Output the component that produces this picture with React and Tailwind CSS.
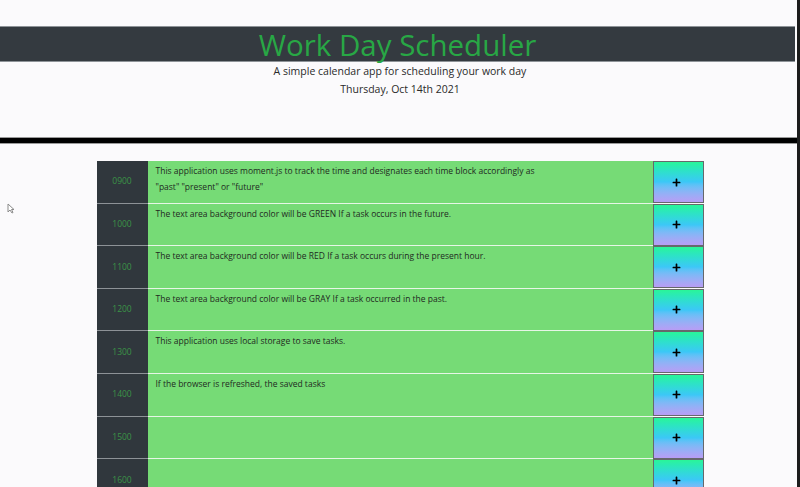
import { FaPlus } from "react-icons/fa";

const hours = [
  {
    time: "0900",
    lines: [
      "This application uses moment.js to track the time and designates each time block accordingly as",
      '"past" "present" or "future"',
    ],
  },
  { time: "1000", lines: ["The text area background color will be GREEN If a task occurs in the future."] },
  { time: "1100", lines: ["The text area background color will be RED If a task occurs during the present hour."] },
  { time: "1200", lines: ["The text area background color will be GRAY If a task occurred in the past."] },
  { time: "1300", lines: ["This application uses local storage to save tasks."] },
  { time: "1400", lines: ["If the browser is refreshed, the saved tasks"] },
  { time: "1500", lines: [] },
  { time: "1600", lines: [] },
];

function TimeBlock({ time, lines }) {
  return (
    <div className="flex h-[42.6px]">
      <div className="w-[51px] bg-[#30373d] border-b border-[#8d9297] flex items-center justify-center text-[8.5px] text-[#3b9447]">
        {time}
      </div>
      <div className="flex-1 bg-[#76db76] border-b border-[#e6f6e6] px-2 pt-[2px] text-[8.5px] leading-[16px] text-[#1f2a1f]">
        {lines.map((line, i) => (
          <div key={i}>{line}</div>
        ))}
      </div>
      <button className="w-[51px] h-[42px] border border-[#66686c] bg-linear-to-b from-[#2af598] via-[#3cc7f7] to-[#b79df5] flex items-center justify-center pr-[3px] text-black">
        <FaPlus size={9} />
      </button>
    </div>
  );
}

export default function App() {
  return (
    <div className="relative h-screen overflow-hidden bg-[#fbfafc] font-['Open_Sans',sans-serif]">
      <div className="h-[26px]" />
      {/* dark title bar */}
      <header className="h-[36px] mr-[5px] bg-[#343a40] border-y border-[#8e9398] flex justify-center pt-[3px]">
        <h1 className="text-[29.5px] leading-[30px] text-[#28a745]">Work Day Scheduler</h1>
      </header>
      <p className="text-center text-[10.5px] leading-[18px] text-[#2a2a2a]">
        A simple calendar app for scheduling your work day
      </p>
      <p className="text-center text-[10.5px] leading-[18px] text-[#2a2a2a]">Thursday, Oct 14th 2021</p>

      <div className="mt-[39px] mr-[3px] h-[7px] bg-black border-y border-[#9a9a9a]" />

      <div className="mt-[17px] w-[607px] mx-auto">
        {hours.map((h) => (
          <TimeBlock key={h.time} time={h.time} lines={h.lines} />
        ))}
      </div>

      {/* window edge caught in the capture */}
      <div className="absolute right-0 top-0 bottom-0 w-[3px] bg-[#1c1c1c]" />

      {/* mouse pointer left in the capture */}
      <svg className="absolute left-[7px] top-[203px]" width="8" height="11" viewBox="0 0 8 11">
        <path d="M1 1 L1 9 L3 7 L5 10 L6 9.5 L4.5 6.5 L7 6.5 Z" fill="#fff" stroke="#8a8a8a" strokeWidth="1" />
      </svg>
    </div>
  );
}
